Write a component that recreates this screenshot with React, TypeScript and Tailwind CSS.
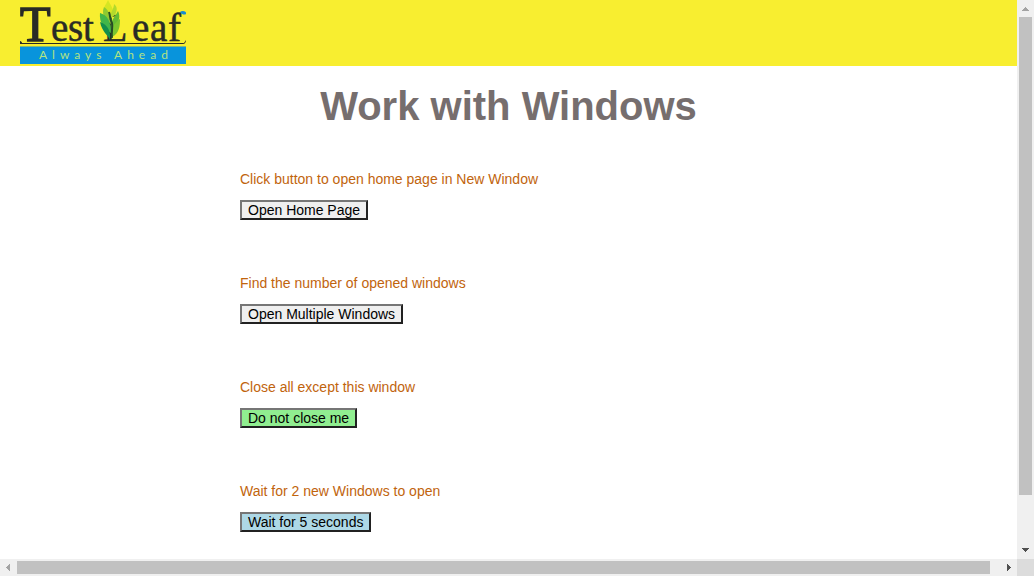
import React from "react";

type Task = { label: string; action: string; tone: string };

const tasks: Task[] = [
  { label: "Click button to open home page in New Window", action: "Open Home Page", tone: "bg-[#efefef]" },
  { label: "Find the number of opened windows", action: "Open Multiple Windows", tone: "bg-[#efefef]" },
  { label: "Close all except this window", action: "Do not close me", tone: "bg-[#90ee90]" },
  { label: "Wait for 2 new Windows to open", action: "Wait for 5 seconds", tone: "bg-[#add8e6]" },
];

function Logo() {
  return (
    <svg width="168" height="64" viewBox="0 0 168 64" role="img" aria-label="TestLeaf, Always Ahead" className="block">
      <g fill="#292b26">
        <g fontFamily="Liberation Serif, serif" fontSize="39" stroke="#292b26" strokeWidth="0.5">
          <text x="0" y="41" fontSize="50" strokeWidth="1.5">T</text>
          <text x="31" y="41">e</text>
          <text x="48" y="41">s</text>
          <text x="63" y="41">t</text>
          <text x="83" y="41" fontSize="40">L</text>
          <text x="112" y="41">e</text>
          <text x="130" y="41">a</text>
          <text x="148" y="41">f</text>
        </g>
        <path d="M0 43H164L166 40C166 42 165 44 163 44H0Z" />
        <path d="M0 41C1 41 2 42 2 43H0Z" />
      </g>
      <path d="M160 12C162 10 167 11 166 14C165 15 162 15 160 12Z" fill="#168bd2" />
      <path d="M88 0C90 5 95 8 92 16L90 18C84 13 83 7 86 4Z" fill="#d6e622" />
      <path d="M94 4C98 7 97 11 95 15L91 18C90 12 94 9 94 4Z" fill="#b2d92c" />
      <path d="M84 7C89 10 90 15 91 24C85 20 81 14 84 7Z" fill="#8fca31" />
      <path d="M98 11C101 17 99 24 91 30C89 22 95 17 98 11Z" fill="#65bb34" />
      <path d="M80 13C87 15 91 21 91 33C84 30 79 22 80 13Z" fill="#42b649" />
      <path d="M100 19C100 27 99 33 92 37C90 29 94 23 100 19Z" fill="#7ac52f" />
      <path d="M80 22C88 25 91 31 90 40C88 35 82 32 80 22Z" fill="#138f4c" />
      <path d="M89 12C91 17 89 18 92 23C93 29 91 31 92 38" fill="none" stroke="#254b25" strokeWidth="2" />
      <path d="M0 46H166V47H0Z" fill="#83b976" />
      <path d="M0 47H166V64H0Z" fill="#0894dc" />
      <text x="19" y="59" fill="#b4e382" fontFamily="Lato, sans-serif" fontSize="12" className="tracking-[5px]">
        Always Ahead
      </text>
    </svg>
  );
}

const arrow = "block h-[17px] w-[17px] shrink-0";

export default function App() {
  return (
    <div className="grid h-screen grid-cols-[minmax(0,1fr)_17px] grid-rows-[minmax(0,1fr)_17px] bg-white font-['Liberation_Sans',Arial,sans-serif]">
      <div className="overflow-hidden">
        <header className="h-[66px] bg-[#f8ee30] px-5">
          <Logo />
        </header>
        <main>
          <h1 className="pt-4 text-center text-[40px] leading-12 font-bold text-[#766e6e]">Work with Windows</h1>
          <div className="ml-60 flex flex-col gap-[54px] pt-10">
            {tasks.map((task, i) => (
              <section key={task.action} className="flex flex-col items-start gap-3">
                <label htmlFor={`task-${i}`} className="text-sm leading-[18px] text-[#c1640d]">
                  {task.label}
                </label>
                <button
                  id={`task-${i}`}
                  type="button"
                  className={`border-2 border-t-[#767676] border-r-[#212121] border-b-[#212121] border-l-[#767676] px-1.5 text-sm leading-4 text-black ${task.tone}`}
                >
                  {task.action}
                </button>
              </section>
            ))}
          </div>
        </main>
      </div>
      <div className="flex flex-col items-center bg-[#f0f0f0]" aria-hidden="true">
        <svg className={arrow} viewBox="0 0 17 17" shapeRendering="crispEdges">
          <path d="M8 7h1v1h1v1h1v1h1v1H5v-1h1V9h1V8h1z" fill="#a3a3a3" />
        </svg>
        <div className="flex w-full grow flex-col items-center">
          <div className="w-[13px] grow-[478] basis-0 bg-[#c1c1c1]" />
          <div className="grow-[47] basis-0" />
        </div>
        <svg className={arrow} viewBox="0 0 17 17" shapeRendering="crispEdges">
          <path d="M5 6h7v1h-1v1h-1v1H9v1H8V9H7V8H6V7H5z" fill="#505050" />
        </svg>
      </div>
      <div className="flex items-center bg-[#f0f0f0]" aria-hidden="true">
        <svg className={arrow} viewBox="0 0 17 17" shapeRendering="crispEdges">
          <path d="M6 8h1V7h1V6h1V5h1v7H9v-1H8v-1H7V9H6z" fill="#a3a3a3" />
        </svg>
        <div className="flex h-full grow items-center">
          <div className="h-[13px] grow-[973] basis-0 bg-[#c1c1c1]" />
          <div className="grow-[10] basis-0" />
        </div>
        <svg className={arrow} viewBox="0 0 17 17" shapeRendering="crispEdges">
          <path d="M7 5h1v1h1v1h1v1h1v1h-1v1H9v1H8v1H7z" fill="#505050" />
        </svg>
      </div>
      <div className="bg-[#dcdcdc]" aria-hidden="true" />
    </div>
  );
}
